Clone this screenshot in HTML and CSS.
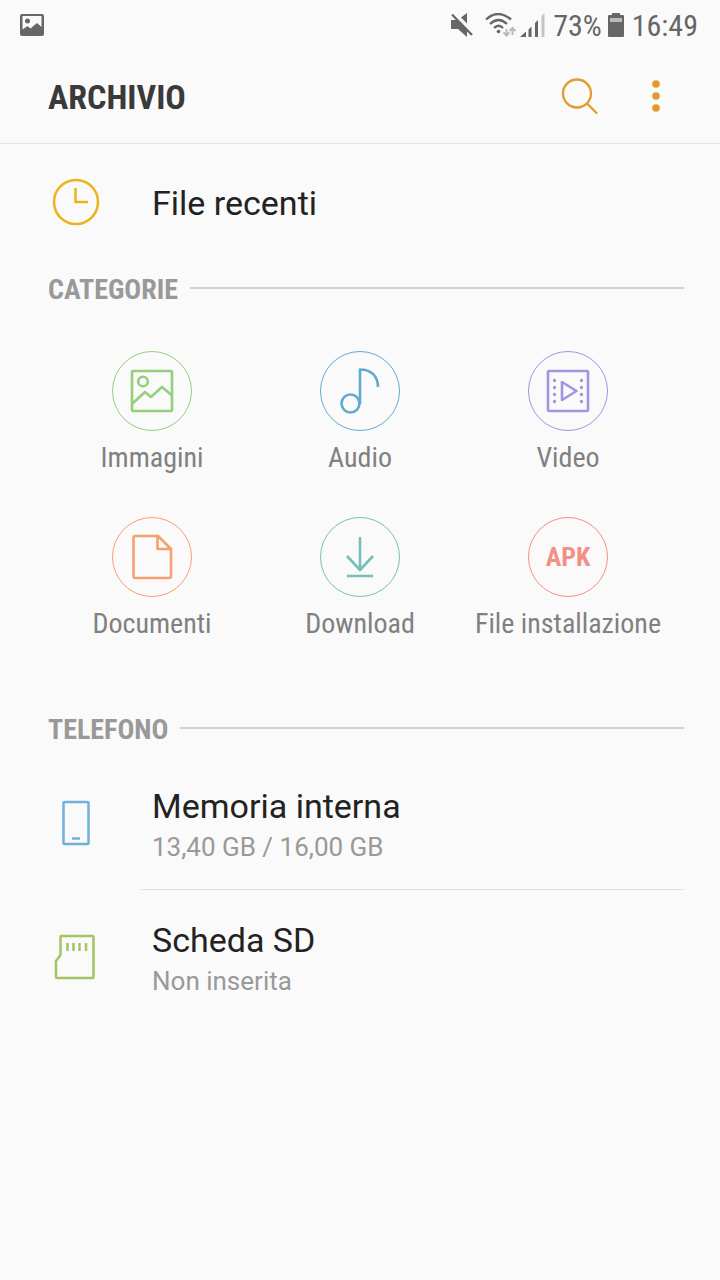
FILE: index.html
```
<!DOCTYPE html>
<html lang="it">
<head>
<meta charset="utf-8">
<meta name="viewport" content="width=device-width, initial-scale=1">
<title>Archivio</title>
<link rel="stylesheet" href="styles.css">
</head>
<body>
<div class="status">
  <svg class="status-image" width="24" height="22" viewBox="0 0 24 22"><path fill="currentColor" fill-rule="evenodd" d="M2 0H22Q24 0 24 2V20Q24 22 22 22H2Q0 22 0 20V2Q0 0 2 0ZM2.500 2V15.500L7.500 12L10.500 14.500L17 9L21.500 13V2Z"/><circle cx="7.500" cy="7" r="2.500" fill="currentColor"/></svg>
  <div class="status-right">
    <svg width="22" height="24" viewBox="0 0 22 24" fill="currentColor"><path d="M0 7H6L16 17V24L7 16H0Z"/><path d="M10 4.500L16 0V10.500Z"/><path d="M3 0.500L21 19" stroke="#fafafa" stroke-width="1.500"/><path d="M1 1.500L21 22" stroke="currentColor" stroke-width="2.300"/></svg>
    <svg class="wifi" width="31" height="24" viewBox="0 0 31 24" fill="none" stroke="currentColor" stroke-width="2.300"><path d="M1 6.500Q13 -4.500 26 6.500M5 11Q13.500 3 22 11M9 15Q13.500 10.500 18 15"/><circle cx="13.500" cy="18.500" r="1.800" fill="currentColor" stroke="none"/><g stroke="#bbb" stroke-width="2"><path d="M21.500 16V22M18.500 19.500L21.500 22.500L24.500 19.500M27.500 22V15M24.500 18L27.500 15L30.500 18"/></g></svg>
    <svg class="signal" width="25" height="24" viewBox="0 0 25 24" fill="currentColor"><path d="M0 24L6 18.500V24ZM8.500 16.500L11.500 13.500V24H8.500ZM15 10L18 7V24H15Z"/><path fill="#c4c4c4" d="M21.500 3L24.500 0V24H21.500Z"/></svg>
    <span>73%</span>
    <svg class="battery" width="16" height="24" viewBox="0 0 16 24"><path fill="currentColor" d="M4 0H12V2H15Q16 2 16 3V23Q16 24 15 24H1Q0 24 0 23V3Q0 2 1 2H4Z"/><path fill="#bbb" d="M2 5H14V9H2Z"/></svg>
    <span>16:49</span>
  </div>
</div>
<header class="appbar">
  <h1>ARCHIVIO</h1>
  <button class="icon-button" type="button" aria-label="Cerca"><svg width="38" height="38" viewBox="0 0 38 38" fill="none" stroke="currentColor" stroke-width="2.300" stroke-linecap="round"><circle cx="16" cy="15.500" r="14"/><path d="M26 25.500L35.500 35"/></svg></button>
  <button class="icon-button" type="button" aria-label="Altre opzioni"><svg width="8" height="34" viewBox="0 0 8 34" fill="currentColor"><circle cx="4" cy="4" r="3.800"/><circle cx="4" cy="16" r="3.800"/><circle cx="4" cy="28" r="3.800"/></svg></button>
</header>
<main>
  <a class="row recent" href="#recenti">
    <svg class="row-icon yellow" width="56" height="56" viewBox="0 0 56 56" fill="none" stroke="currentColor" stroke-width="2.500"><circle cx="28" cy="28" r="22"/><path d="M27.500 14V28H40"/></svg>
    <span class="title">File recenti</span>
  </a>
  <section>
    <h2>CATEGORIE</h2>
    <div class="grid">
      <a class="category" href="#immagini"><span class="circle green"><svg width="80" height="80" viewBox="0 0 80 80"><rect x="20" y="20" width="40" height="40" rx="1"/><circle cx="31" cy="30.500" r="4.800"/><path d="M20 53L33 41L39 46L50 36L60 44.500"/></svg></span>Immagini</a>
      <a class="category" href="#audio"><span class="circle blue"><svg width="80" height="80" viewBox="0 0 80 80"><circle cx="30.500" cy="52.500" r="9"/><path d="M40 53V18.500C51 18.500 58 25 58 36"/></svg></span>Audio</a>
      <a class="category" href="#video"><span class="circle purple"><svg width="80" height="80" viewBox="0 0 80 80"><rect x="20" y="20" width="40" height="40" rx="1"/><path d="M34 31V49L48.500 40Z"/><path stroke-width="3.400" stroke-linecap="round" stroke-dasharray="0 7" d="M26.500 29.500V51M53.500 29.500V51"/></svg></span>Video</a>
      <a class="category" href="#documenti"><span class="circle orange"><svg width="80" height="80" viewBox="0 0 80 80"><path d="M23 19H46L59 32V59Q59 61 57 61H23Q21.500 61 21.500 59V21Q21.500 19 23 19ZM45.500 19V32H59"/></svg></span>Documenti</a>
      <a class="category" href="#download"><span class="circle teal"><svg width="80" height="80" viewBox="0 0 80 80"><path d="M40 20V53M27 39L40 53L53 39M27 59H53"/></svg></span>Download</a>
      <a class="category" href="#apk"><span class="circle red">APK</span>File installazione</a>
    </div>
  </section>
  <section>
    <h2>TELEFONO</h2>
    <a class="row storage" href="#memoria">
      <svg class="row-icon phone" width="56" height="56" viewBox="0 0 56 56" fill="none" stroke="currentColor" stroke-width="2.500"><rect x="15.500" y="7" width="25" height="42" rx="1"/><path d="M24 43.500H32"/></svg>
      <span class="text"><span class="title">Memoria interna</span><span class="subtitle">13,40 GB / 16,00 GB</span></span>
    </a>
    <hr>
    <a class="row storage" href="#sd">
      <svg class="row-icon sd" width="56" height="56" viewBox="0 0 56 56" fill="none" stroke="currentColor" stroke-width="2.500" stroke-linejoin="round"><path d="M13 7H44.500Q45.500 7 45.500 8V48Q45.500 49 44.500 49H9Q8 49 8 48V32L12.500 26V8Q12.500 7 13 7Z"/><path d="M19.500 14V22M25.500 14V22M31.500 14V22M38 14V22"/></svg>
      <span class="text"><span class="title">Scheda SD</span><span class="subtitle">Non inserita</span></span>
    </a>
  </section>
</main>
</body>
</html>
```
FILE: styles.css
```
* { box-sizing: border-box; }
body { margin: 0; background: #fafafa; color: #222; font-family: Roboto, sans-serif; }
a { color: inherit; text-decoration: none; }
svg { display: block; flex: none; }
h1, h2 { margin: 0; font-weight: 700; }
h1, h2, .status, .category { font-family: "Roboto Condensed", Roboto, sans-serif; }

.status { display: flex; align-items: center; justify-content: space-between; height: 50px; padding: 0 22px 0 20px; color: #666; font-size: 30px; }
.status-right { display: flex; align-items: center; }
.wifi { margin-left: 12px; }
.signal { margin: 0 8px 0 4px; }
.battery { margin: 0 8px 0 6px; }

.appbar { display: flex; align-items: center; height: 94px; padding: 0 40px 0 48px; border-bottom: 1px solid #e4e4e4; }
h1 { flex: 1; color: #3a3a3a; font-size: 34px; line-height: 40px; }
.icon-button { display: flex; align-items: center; justify-content: center; width: 48px; height: 48px; margin-left: 28px; padding: 0; border: 0; background: none; color: #e09c2c; }

.row { display: flex; align-items: center; padding: 0 36px 0 48px; }
.row-icon { margin-right: 48px; }
.recent { height: 116px; }
.title { font-size: 34px; line-height: 42px; }
.recent .title { padding-top: 2px; }
.yellow { color: #edb31c; }

h2 { display: flex; align-items: center; gap: 12px; padding: 4px 36px 0 48px; color: #999; font-size: 28px; line-height: 52px; }
h2::after { content: ""; flex: 1; height: 2px; margin-bottom: 4px; background: #d2d2d2; }

.grid { display: grid; grid-template-columns: repeat(3, 1fr); row-gap: 42px; padding: 35px 48px 59px; }
.category { display: flex; flex-direction: column; align-items: center; gap: 10px; color: #808080; font-size: 28px; line-height: 34px; white-space: nowrap; }
.circle { display: flex; align-items: center; justify-content: center; width: 80px; height: 80px; border: 1px solid currentColor; border-radius: 50%; font-size: 26px; font-weight: 700; }
.circle svg { fill: none; stroke: currentColor; stroke-width: 2.600; stroke-linejoin: round; }
.green { color: #92d07c; }
.blue { color: #62a8d4; }
.purple { color: #a394e0; }
.orange { color: #f5a070; }
.teal { color: #74c0bc; }
.red { color: #f48f84; }

.storage { height: 133px; }
.text { display: flex; flex-direction: column; padding-top: 6px; }
.subtitle { color: #999; font-size: 26px; line-height: 40px; }
.phone { color: #70b0dc; }
.sd { color: #a4c464; }
hr { height: 1px; margin: 0 36px 0 141px; border: 0; background: #e2e2e2; }
```
